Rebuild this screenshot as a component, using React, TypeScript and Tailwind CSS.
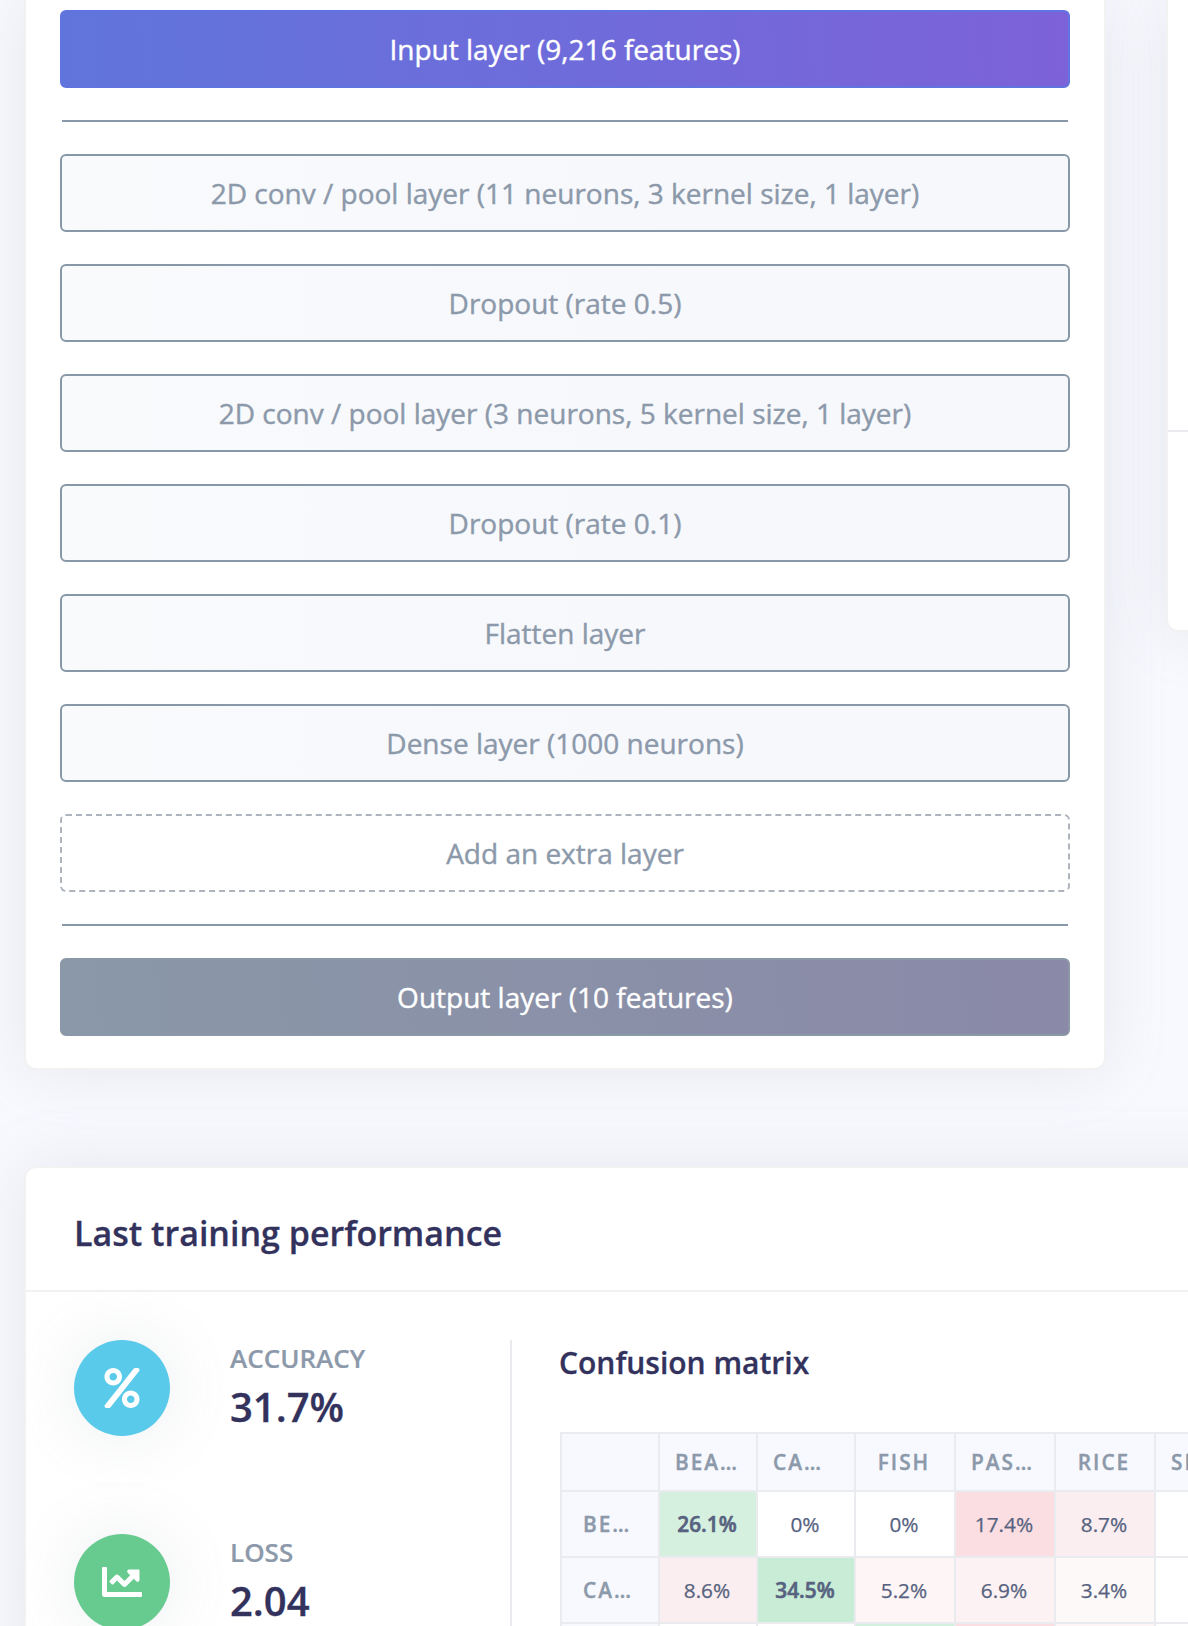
import React from 'react';
import { FaChartLine, FaPercent } from 'react-icons/fa';

const cardShadow = 'shadow-[0_0_64px_0_rgba(132,144,156,0.165)]';

const layers = [
  '2D conv / pool layer (11 neurons, 3 kernel size, 1 layer)',
  'Dropout (rate 0.5)',
  '2D conv / pool layer (3 neurons, 5 kernel size, 1 layer)',
  'Dropout (rate 0.1)',
  'Flatten layer',
  'Dense layer (1000 neurons)',
];

const button =
  'flex h-[78px] w-full shrink-0 items-center justify-center rounded-[6px] border-2 text-[28px] leading-[42px] [-webkit-text-stroke:0.4px]';

function Rule() {
  return <div className="mx-0.5 h-0.5 shrink-0 bg-[#8898a8]" />;
}

function Architecture() {
  return (
    <section
      className={`flex h-[1070px] w-[1082px] shrink-0 flex-col gap-8 rounded-b-[12px] border-2 border-t-0 border-[#f2f2f2] bg-white px-[34px] pt-2.5 ${cardShadow}`}
    >
      <button className={`${button} border-[#6074e0] bg-[linear-gradient(87deg,#6075dc_0%,#7d62d9_100%)] text-white`}>
        Input layer (9,216 features)
      </button>
      <Rule />
      {layers.map((name) => (
        <button
          key={name}
          className={`${button} border-[#8898a8] bg-[linear-gradient(87deg,#f8fafc_0%,#f7f8fc_60%)] text-[#8c99aa]`}
        >
          {name}
        </button>
      ))}
      <button className={`${button} border-dashed border-[#adb4bd] bg-white text-[#8c99aa]`}>Add an extra layer</button>
      <Rule />
      <button className={`${button} border-[#8a98a8] bg-[linear-gradient(87deg,#8a98a8_0%,#8a89a8_100%)] text-white`}>
        Output layer (10 features)
      </button>
    </section>
  );
}

function Metric({ label, value, color, children }: { label: string; value: string; color: string; children: React.ReactNode }) {
  return (
    <div className="flex h-[194px] items-start">
      <div className={`flex size-24 shrink-0 items-center justify-center rounded-full text-[40px] text-white ${color} ${cardShadow}`}>
        {children}
      </div>
      <div className="ml-[60px]">
        <div className="text-[26px] leading-[37px] font-semibold text-[#8c99aa] [-webkit-text-stroke:0.2px]">{label}</div>
        <div className="text-[40px] leading-[60px] font-semibold text-[#32325d] [-webkit-text-stroke:0.3px]">{value}</div>
      </div>
    </div>
  );
}

type Cell = { text: string; tone: string };

const headers = ['', 'BEA…', 'CA…', 'FISH', 'PAS…', 'RICE', 'SHR…'];

const rows: { label: string; cells: Cell[] }[] = [
  {
    label: 'BE…',
    cells: [
      { text: '26.1%', tone: 'bg-[#d6f0df] font-semibold [-webkit-text-stroke:0.6px]' },
      { text: '0%', tone: 'bg-white' },
      { text: '0%', tone: 'bg-white' },
      { text: '17.4%', tone: 'bg-[#fbdee1]' },
      { text: '8.7%', tone: 'bg-[#faeef0]' },
      { text: '', tone: 'bg-white' },
    ],
  },
  {
    label: 'CA…',
    cells: [
      { text: '8.6%', tone: 'bg-[#fbeef0]' },
      { text: '34.5%', tone: 'bg-[#c9ecd7] font-semibold [-webkit-text-stroke:0.6px]' },
      { text: '5.2%', tone: 'bg-[#fef5f6]' },
      { text: '6.9%', tone: 'bg-[#fcf2f3]' },
      { text: '3.4%', tone: 'bg-[#fdf9f9]' },
      { text: '', tone: 'bg-white' },
    ],
  },
  {
    label: '',
    cells: [
      { text: '', tone: 'bg-white' },
      { text: '', tone: 'bg-white' },
      { text: '', tone: 'bg-[#d3f0de]' },
      { text: '', tone: 'bg-[#fbdee1]' },
      { text: '', tone: 'bg-[#fef5f6]' },
      { text: '', tone: 'bg-white' },
    ],
  },
];

const columns = 'grid grid-cols-[96px_96px_96px_98px_98px_98px_98px] gap-0.5';

function ConfusionMatrix() {
  return (
    <div className="flex w-[700px] flex-col gap-0.5 bg-[#e9ebef] p-0.5 text-[20.8px] [-webkit-text-stroke:0.25px]">
      <div className={`${columns} h-14`}>
        {headers.map((h, i) => (
          <div
            key={i}
            className={`flex items-center overflow-hidden bg-[#f8f9fe] pt-0.5 font-semibold tracking-[2px] text-[#8c99aa] [-webkit-text-stroke:0.4px] ${
              h.endsWith('…') ? 'pl-[15px]' : 'justify-center pr-0.5'
            }`}
          >
            {h}
          </div>
        ))}
      </div>
      {rows.map((r, i) => (
        <div key={i} className={`${columns} h-16`}>
          <div className="flex items-center bg-[#f8f9fe] pt-0.5 pl-[21px] font-semibold tracking-[2px] text-[#8c99aa] [-webkit-text-stroke:0.4px]">
            {r.label}
          </div>
          {r.cells.map((c, j) => (
            <div key={j} className={`flex items-center justify-center pt-0.5 pr-0.5 text-[#56627f] ${c.tone}`}>
              {c.text}
            </div>
          ))}
        </div>
      ))}
    </div>
  );
}

function Performance() {
  return (
    <section className={`mt-24 ml-6 w-[1400px] rounded-[12px] border-2 border-[#f2f2f2] bg-white ${cardShadow}`}>
      <header className="flex h-[124px] items-center border-b-2 border-[#f2f2f2] pl-12">
        <h3 className="pt-2 text-[34px] leading-[51px] font-semibold text-[#32325d] [-webkit-text-stroke:0.3px]">
          Last training performance
        </h3>
      </header>
      <div className="flex h-[600px] pt-12 pl-12">
        <div className="w-[436px] shrink-0">
          <Metric label="ACCURACY" value="31.7%" color="bg-[#5acaeb]">
            <FaPercent />
          </Metric>
          <Metric label="LOSS" value="2.04" color="bg-[#67cb90]">
            <FaChartLine />
          </Metric>
        </div>
        <div className="border-l-2 border-[#e9ebef] pl-12">
          <h4 className="-ml-px mb-[46px] h-[46px] text-[30px] leading-[46px] font-semibold text-[#32325d] [-webkit-text-stroke:0.3px]">
            Confusion matrix
          </h4>
          <ConfusionMatrix />
        </div>
      </div>
    </section>
  );
}

export default function App() {
  return (
    <main className="h-[1626px] w-[1188px] overflow-hidden bg-[#f8f9fe] font-['Open_Sans',sans-serif]">
      <div className="flex items-start gap-[60px] pl-6">
        <Architecture />
        <aside
          className={`h-[632px] w-[600px] shrink-0 rounded-b-[12px] border-2 border-t-0 border-[#f2f2f2] bg-white pt-[430px] ${cardShadow}`}
        >
          <div className="h-0.5 bg-[#e9ebef]" />
        </aside>
      </div>
      <Performance />
    </main>
  );
}
